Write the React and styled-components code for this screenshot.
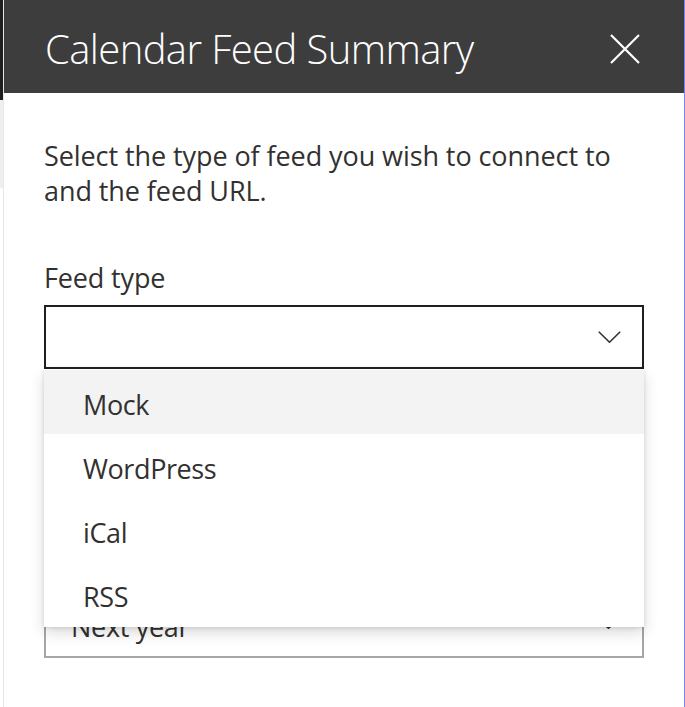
import React from "react";
import styled, { createGlobalStyle } from "styled-components";

const Global = createGlobalStyle`
  html, body { margin: 0; padding: 0; background: #fff; }
  body { font-family: "Open Sans", "Noto Sans", sans-serif; color: #323130; }
  * { box-sizing: border-box; }
`;

const Page = styled.div`
  display: flex;
  width: 685px;
  height: 707px;
  overflow: hidden;
`;

const Backdrop = styled.div`
  width: 3px;
  flex: none;
  background: linear-gradient(to bottom, #1f1f1f 0 100px, #efefef 100px 188px, #fff 188px);
`;

const Panel = styled.section`
  flex: 1;
  display: flex;
  flex-direction: column;
  background: #fff;
  border-left: 1px solid #e6e6e6;
  border-right: 1px solid #7b83eb;
`;

const Header = styled.header`
  height: 93px;
  flex: none;
  background: #3d3d3d;
  display: flex;
  align-items: center;
  justify-content: space-between;
  padding: 0 43px 0 41px;
`;

const Title = styled.h1`
  margin: 0;
  font-size: 40px;
  font-weight: 300;
  color: #fff;
  line-height: 1;
  letter-spacing: -0.6px;
  padding-top: 4px;
`;

const CloseButton = styled.button`
  width: 32px;
  height: 32px;
  padding: 0;
  border: 0;
  background: transparent;
  display: flex;
  align-items: center;
  justify-content: center;
  margin-top: 4px;
`;

const Body = styled.div`
  padding: 45px 40px 0 40px;
  display: flex;
  flex-direction: column;
`;

const Description = styled.p`
  margin: 0;
  font-size: 27px;
  line-height: 35px;
  color: #323130;
  letter-spacing: -0.08px;
`;

const Label = styled.label`
  display: block;
  margin-top: ${(p) => p.$top || 0}px;
  font-size: 27px;
  line-height: 35px;
  color: #323130;
  letter-spacing: -0.15px;
`;

const Field = styled.div`
  position: relative;
  margin-top: ${(p) => p.$top || 0}px;
`;

const SelectBox = styled.div`
  height: 64px;
  border: 2px solid ${(p) => (p.$active ? "#201f1e" : "#a6a6a6")};
  display: flex;
  align-items: center;
  justify-content: space-between;
  padding: 0 ${(p) => p.$padRight}px 0 25px;
  font-size: 27px;
  color: #323130;
  letter-spacing: -0.3px;
  background: #fff;
`;

const Menu = styled.ul`
  position: absolute;
  top: 100%;
  left: 0;
  right: 0;
  margin: 0;
  padding: 1px 0;
  list-style: none;
  background: #fff;
  z-index: 2;
  box-shadow: 0 6px 14px rgba(0, 0, 0, 0.14), 0 1px 4px rgba(0, 0, 0, 0.12);
`;

const Item = styled.li`
  height: 64px;
  display: flex;
  align-items: center;
  padding: 4px 0 0 39px;
  font-size: 27px;
  color: #323130;
  letter-spacing: -0.4px;
  background: ${(p) => (p.$hover ? "#f3f3f3" : "#fff")};
`;

const Chevron = ({ w, h }) => (
  <svg width={w} height={h} viewBox={`0 0 ${w} ${h}`} fill="none">
    <polyline
      points={`0.8,0.8 ${w / 2},${h - 0.8} ${w - 0.8},0.8`}
      stroke="#323130"
      strokeWidth="1.6"
      strokeLinejoin="miter"
    />
  </svg>
);

const CloseIcon = () => (
  <svg width="30" height="30" viewBox="0 0 30 30" fill="none">
    <path d="M1 1 L29 29 M29 1 L1 29" stroke="#fff" strokeWidth="2.2" />
  </svg>
);

const options = ["Mock", "WordPress", "iCal", "RSS"];

export default function App() {
  return (
    <>
      <Global />
      <Page>
        <Backdrop />
        <Panel>
          <Header>
            <Title>Calendar Feed Summary</Title>
            <CloseButton aria-label="Close">
              <CloseIcon />
            </CloseButton>
          </Header>
          <Body>
            <Description>
              Select the type of feed you wish to connect to and the feed URL.
            </Description>
            <Label $top={52}>Feed type</Label>
            <Field $top={10}>
              <SelectBox $active $padRight={21}>
                <span />
                <Chevron w={23} h={12} />
              </SelectBox>
              <Menu>
                {options.map((o, i) => (
                  <Item key={o} $hover={i === 0}>
                    {o}
                  </Item>
                ))}
              </Menu>
            </Field>
            <Field $top={225}>
              <SelectBox $padRight={29}>
                <span>Next year</span>
                <Chevron w={9} h={5} />
              </SelectBox>
            </Field>
          </Body>
        </Panel>
      </Page>
    </>
  );
}
